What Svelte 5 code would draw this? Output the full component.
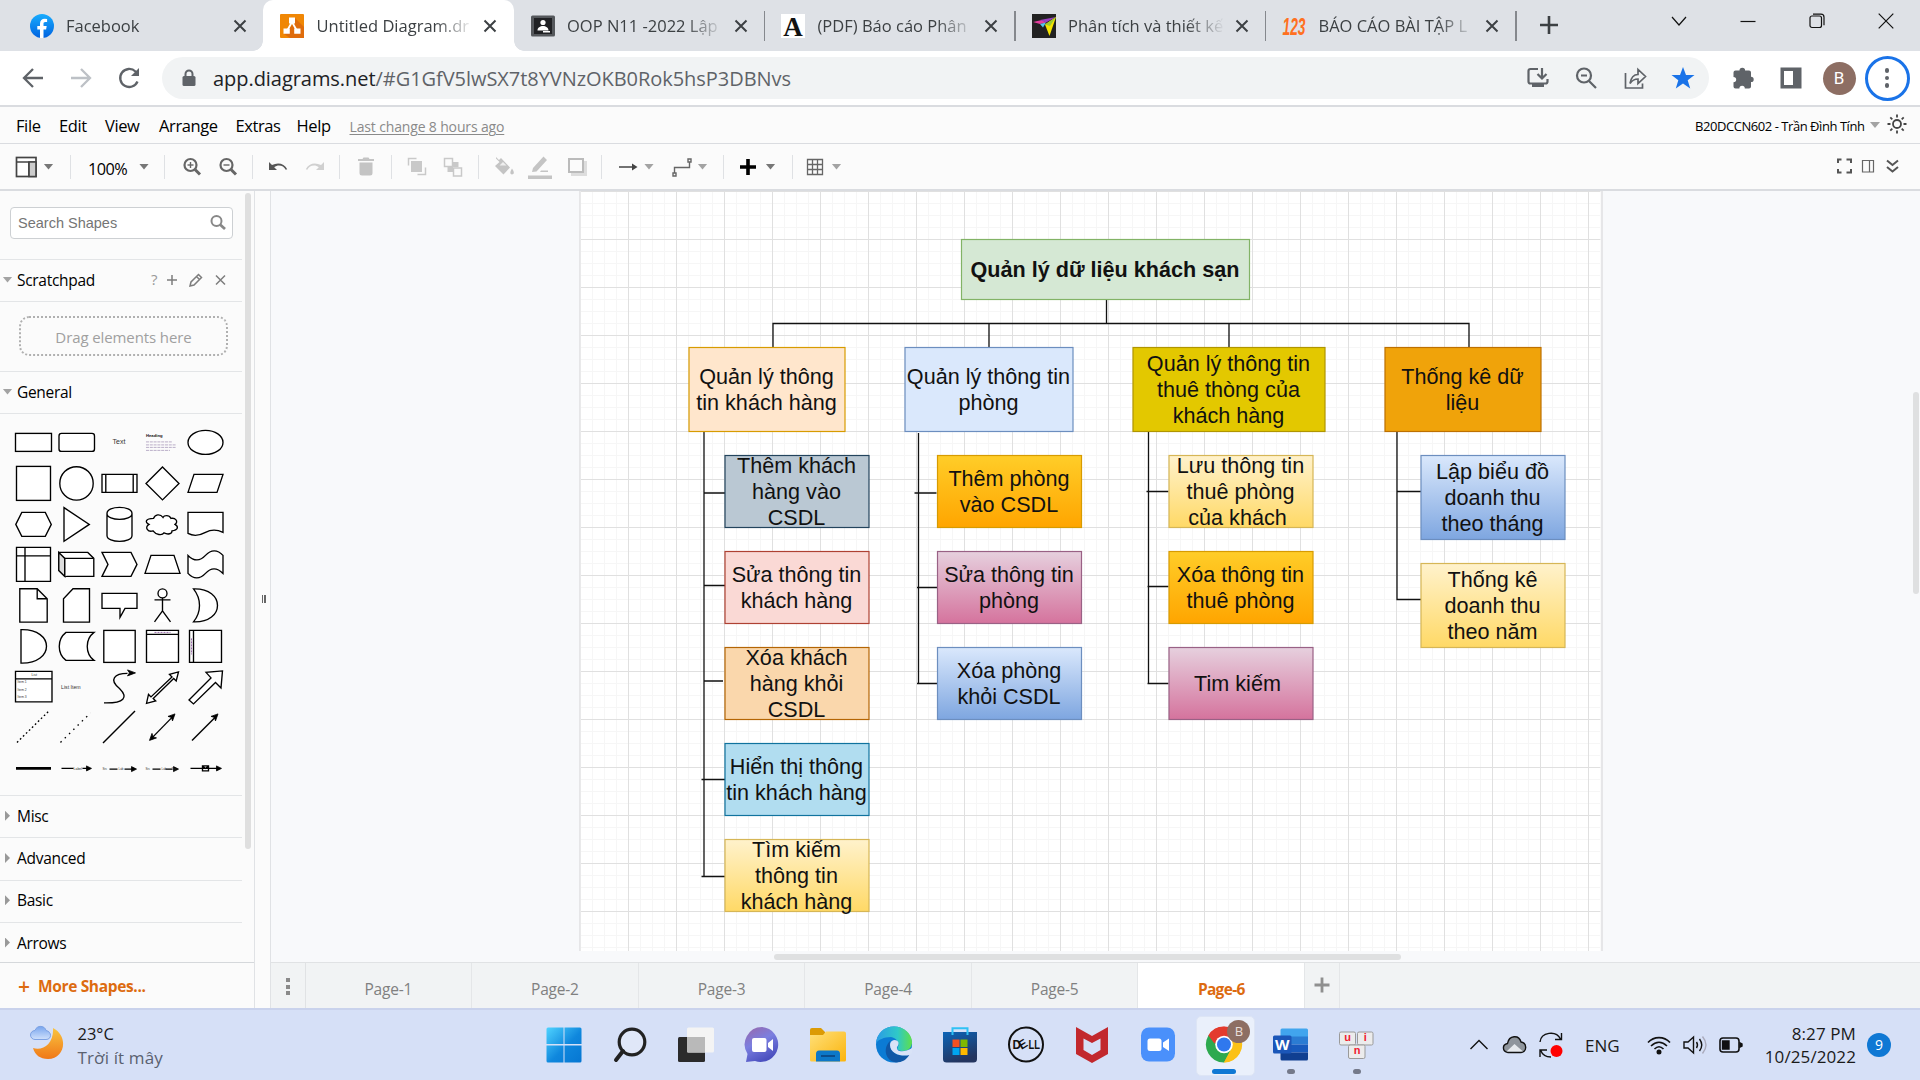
<script lang="ts">
  const tabs = [
    { title: 'Facebook', icon: 'fb' },
    { title: 'Untitled Diagram.dr', icon: 'drawio', active: true },
    { title: 'OOP N11 -2022 Lập', icon: 'oop' },
    { title: '(PDF) Báo cáo Phân', icon: 'pdf' },
    { title: 'Phân tích và thiết kế', icon: 'design' },
    { title: 'BÁO CÁO BÀI TẬP L', icon: 'n123' }
  ];
  const menus = [
    { t: 'File', w: 43 }, { t: 'Edit', w: 46 }, { t: 'View', w: 54 },
    { t: 'Arrange', w: 76.5 }, { t: 'Extras', w: 61 }, { t: 'Help', w: 53 }
  ];
  // [kind, gap before the item]
  const tools: [string, number][] = [
    ['view', 14], ['caret', 5.5], ['sep', 16.5], ['zoom', 17], ['caret', 11], ['sep', 15],
    ['zin', 15], ['zout', 12], ['sep', 12], ['undo', 13], ['redo', 13], ['sep', 12],
    ['trash', 14], ['sep', 13], ['front', 13], ['back', 12], ['sep', 13], ['fill', 12.5],
    ['line', 12], ['shadow', 13], ['sep', 12.5], ['arrow', 14], ['caretl', 4], ['way', 15.5],
    ['caretl', 4], ['sep', 15.5], ['plus', 12], ['caret', 5.5], ['sep', 16.5], ['table', 9.5], ['caretl', 5]
  ];
  const shapes: string[] = [
    '<rect x="-18" y="-9" width="36" height="18"/>',
    '<rect x="-17.5" y="-9" width="35.5" height="18" rx="2.5"/>',
    '<text x="-.5" y="2" font-size="7" text-anchor="middle">Text</text>',
    '<text x="-16.5" y="-5" font-size="4.2" font-weight="bold" class="hd">Heading</text><path class="lorem" d="M-16.500-.5h26M-16.500 2.500h30M-16.500 5h30M-16.500 8h24"/>',
    '<ellipse rx="17.5" ry="12"/>',
    '<rect x="-17" y="-17" width="34" height="34"/>',
    '<circle r="16.7"/>',
    '<path d="M-17.500-9h35v18h-35zM-13.700-9v18M13.700-9v18"/>',
    '<path d="M0-16.500 16.500 0 0 16.500-16.500 0z"/>',
    '<path d="M-17.500 9l6-18h29l-6 18z"/>',
    '<path d="M-17.700 0l6-12h23.500l6 12-6 12h-23.500z"/>',
    '<path d="M-12.500-16.800v33.600L12.800 0z"/>',
    '<path d="M-12.500-11v22c0 8 25 8 25 0v-22c0-8-25-8-25 0c0 8 25 8 25 0"/>',
    '<path d="M-9-6c-8 0-9 4-4.500 6c-5 3-1 8 4 6.500c3 4 9 5 11 2c4 2 8 1 8-2c6-1 7-4 3-6.500c4-3 0-7-4-6c-2-4-7-3-8-1c-3-4-8-3-9.500 1z"/>',
    '<path d="M-17.500-12h35v20c-6-3-12-3-17.500 0s-12 4-17.500 1z"/>',
    '<path d="M-17-17h34v34h-34zM-8.500-17v34M-17-8.500h34"/>',
    '<path d="M-17.700-12h29l6 6v18h-29l-6-6z"/><path class="shade" d="M-17.700-12l6 6v18l-6-6z"/><path d="M-11.700 12v-18h29"/>',
    '<path d="M-17.500-12h29l6 12-6 12h-29l6-12z"/>',
    '<path d="M-17.500 9l6-18h23l6 18z"/>',
    '<path d="M-17.500-9c6 6 12 6 17.500 0s12-6 17.500 0v18c-6-6-12-6-17.500 0s-12 6-17.500 0z"/>',
    '<path d="M-13.700-16.700h17.400l10 10v23.400h-27.400zM3.700-16.700v10h10"/>',
    '<path d="M-3.500-16.700h16.500v33.400h-26v-23.400z"/>',
    '<path d="M-17.500-12h35v15h-12l-5 9v-9h-18z"/>',
    '<circle cy="-12" r="4.500"/><path d="M0-7.500v13M-8-5.500h16M-8 16.500l8-11 8 11"/>',
    '<path d="M-12-16.500c32-1 32 34 0 33c8-10 8-23 0-33z"/>',
    '<path d="M-12.500-16.700c34-1 34 34 0 33.400z"/>',
    '<path d="M17.500-14h-28c-9 7-9 21 0 28h28c-9-7-9-21 0-28z"/>',
    '<rect x="-15.700" y="-16" width="31.400" height="32"/>',
    '<path d="M-16-16h32v32h-32zM-16-12h32"/><path class="dots" d="M-8-14H8"/>',
    '<path d="M-16-16h32v32h-32zM-12-16v32"/><path class="dots" d="M-14-8V8"/>',
    '<path d="M-18-16h36.500v30.500h-36.500zM-18-8.500h36.500"/><text x="-2" y="-11" font-size="3.5">List</text><text x="-16" y="-4" font-size="3.300">Item 1</text><text x="-16" y="3.500" font-size="3.300">Item 2</text><text x="-16" y="11" font-size="3.300">Item 3</text>',
    '<text x="-15.500" y="1.500" font-size="5.200">List Item</text>',
    '<path class="nf" d="M-15.500 15.500C5 16 9 10 0 1c-11-9-5-15 8-15"/><path class="k" d="M16-14.500l-8-3 2 3-2 3z"/>',
    '<path d="M-16 16l2-9 2.500 2.500 21-20-2.500-2.500 9-2.500-2.300 9-2.500-2.500-20.500 20 2.500 2.500z"/>',
    '<path d="M-16.500 12.500l22-22-5-5.500 16.500-1.500-1.500 17-5.500-5.500-22 21.500z"/>',
    '<path stroke-dasharray="1.700 2.500" d="M-16.500 15l32-31.500"/>',
    '<path stroke-dasharray="1.500 4.500" d="M-16 15l30-29.500"/>',
    '<path d="M-16.500 15.500l32-32"/>',
    '<path d="M-11 11l22-22.500"/><path class="k" d="M-13 13l2.500-7 1 3.500 3.500 1zM12.500-13.500l-7 2.500 3.500 1 1 3.500z"/>',
    '<path d="M-13.500 13l24-24"/><path class="k" d="M12.500-13.500l-7 2.500 3.500 1 1 3.500z"/>',
    '<path stroke-width="2.800" d="M-17.500 0h35"/>',
    '<path d="M-15 0h12M6 0h6"/><path class="k" d="M15 0l-5-2.500v5z"/><text x="-3" y="1.500" font-size="3.500">Label</text>',
    '<path d="M-10 .7h8M5 .7h8"/><path class="k" d="M17 .7l-5-2.500v5z"/><text x="-17" y="1.500" font-size="3">Src</text><text x="-1" y="1.500" font-size="3">Lab</text>',
    '<path d="M-10 .7h8M3 .7h7"/><path class="k" d="M16 .7l-5-2.500v5z"/><text x="-17" y="1.500" font-size="3">Src</text><text x="-1" y="1.500" font-size="3">Lab</text><text x="9" y="1.500" font-size="3">Trg</text>',
    '<path d="M-15 0h27M-3-2.500h6v5h-6zl3 2.500 3-2.500"/><path class="k" d="M16 0l-5-2.500v5z"/>'
  ];
  const sections = ['Misc', 'Advanced', 'Basic', 'Arrows'];
  const nodes = [
    { x: 961.5, y: 239.5, w: 288, h: 60, c: 'green', l: ['Quản lý dữ liệu khách sạn'] },
    { x: 689, y: 347.5, w: 156, h: 84, c: 'peach', l: ['Quản lý thông', 'tin khách hàng'] },
    { x: 905, y: 347.5, w: 168, h: 84, c: 'sky', l: ['Quản lý thông tin', 'phòng'] },
    { x: 1133, y: 347.5, w: 192, h: 84, c: 'olive', l: ['Quản lý thông tin', 'thuê thòng của', 'khách hàng'] },
    { x: 1385, y: 347.5, w: 156, h: 84, c: 'orange', l: ['Thống kê dữ', 'liệu'] },
    { x: 725, y: 455.5, w: 144, h: 72, c: 'slate', l: ['Thêm khách', 'hàng vào', 'CSDL'] },
    { x: 725, y: 551.5, w: 144, h: 72, c: 'rose', l: ['Sửa thông tin', 'khách hàng'] },
    { x: 725, y: 647.5, w: 144, h: 72, c: 'tan', l: ['Xóa khách', 'hàng khỏi', 'CSDL'] },
    { x: 725, y: 743.5, w: 144, h: 72, c: 'aqua', l: ['Hiển thị thông', 'tin khách hàng'] },
    { x: 725, y: 839.5, w: 144, h: 72, c: 'cream', l: ['Tìm kiếm', 'thông tin', 'khách hàng'] },
    { x: 937.5, y: 455.5, w: 144, h: 72, c: 'amber', l: ['Thêm phòng', 'vào CSDL'] },
    { x: 937.5, y: 551.5, w: 144, h: 72, c: 'pink', l: ['Sửa thông tin', 'phòng'] },
    { x: 937.5, y: 647.5, w: 144, h: 72, c: 'blue', l: ['Xóa phòng', 'khỏi CSDL'] },
    { x: 1169, y: 455.5, w: 144, h: 72, c: 'cream', l: ['Lưu thông tin', 'thuê phòng', 'của khách\u00a0'] },
    { x: 1169, y: 551.5, w: 144, h: 72, c: 'amber', l: ['Xóa thông tin', 'thuê phòng'] },
    { x: 1169, y: 647.5, w: 144, h: 72, c: 'pink', l: ['Tim kiếm\u00a0'] },
    { x: 1421, y: 455.5, w: 144, h: 84, c: 'blue', l: ['Lập biểu đồ', 'doanh thu', 'theo tháng'] },
    { x: 1421, y: 563.5, w: 144, h: 84, c: 'cream', l: ['Thống kê', 'doanh thu', 'theo năm'] }
  ];
  const gradients = [
    ['g-cream', '#fff2cc', '#ffd966'], ['g-amber', '#ffcd28', '#ffa500'],
    ['g-pink', '#e6d0de', '#d5739d'], ['g-blue', '#dae8fc', '#7ea6e0']
  ];
  const pages = ['Page-1', 'Page-2', 'Page-3', 'Page-4', 'Page-5', 'Page-6'];
  const apps = ['start', 'search', 'tasks', 'chat', 'files', 'edge', 'store', 'dell', 'mcafee', 'zoom', 'chrome', 'word', 'unikey'];
</script>

<div class="screen">
  <header class="tabstrip">
    {#each tabs as tab, i}
      <div class="tab" class:active={tab.active} class:divided={i > 1}>
        <svg class="fav" viewBox="0 0 24 24">
          {#if tab.icon === 'fb'}
            <defs><linearGradient id="fbg" x2="0" y2="1"><stop stop-color="#18acfe" /><stop offset="1" stop-color="#0163e0" /></linearGradient></defs>
            <circle cx="12" cy="12" r="12" fill="url(#fbg)" />
            <path fill="#fff" d="M10 24v-8.500H7.300V12H10V9.800c0-3.400 2-5 4.700-5l2.400.2v3h-1.700c-1.500 0-1.900.8-1.900 1.700V12h3.200l-.6 3.500h-2.600V24z" />
          {:else if tab.icon === 'drawio'}
            <rect width="24" height="24" fill="#f08705" rx="1" /><path fill="#df6c0c" d="M15 4l9 9v11H10l-6-4 8-9z" />
            <path stroke="#fff" stroke-width="1.800" fill="none" d="M12 8l-4.500 8M12 8l4.500 8" /><path fill="#fff" d="M9 3.500h6v6H9zM3.500 14.500h6.300v5.300H3.500zM14.200 14.500h6.300v5.300h-6.300z" />
          {:else if tab.icon === 'oop'}
            <rect y="1.500" width="24" height="21" rx="1.500" fill="#55585c" /><rect x="3" y="4" width="18" height="16" fill="#202124" />
            <circle cx="12" cy="8.500" r="2.600" fill="#fff" /><path fill="#fff" d="M6.500 16.500c0-6 11-6 11 0zM12 17h7v1.500h-7z" />
          {:else if tab.icon === 'pdf'}
            <rect width="24" height="24" fill="#fff" /><text x="12" y="21.500" text-anchor="middle" class="serif-a">A</text>
          {:else if tab.icon === 'design'}
            <rect width="24" height="24" fill="#222" /><path fill="#e83ea0" d="M1 8l9-2 4 2.500-6 1.500z" /><path fill="#9a3fc0" d="M8 6l16-3-10 5.500z" /><path fill="#54c7ec" d="M8 10l6-1.500-3 5z" /><path fill="#f6e500" d="M24 3l-6.500 19L13 10.500z" /><path fill="#9ccb2e" d="M24 3l-6 9-5-1.500z" />
          {:else}
            <text x="12" y="21" text-anchor="middle" class="n123" textLength="23" lengthAdjust="spacingAndGlyphs">123</text>
          {/if}
        </svg>
        <span class="tab-title">{tab.title}</span>
        <svg class="x" viewBox="0 0 14 14"><path d="M1.500 1.500l11 11M12.500 1.500l-11 11" /></svg>
      </div>
    {/each}
    <svg class="newtab" viewBox="0 0 20 20"><path d="M10 1v18M1 10h18" /></svg>
    <div class="winctl">
      <svg viewBox="0 0 16 16"><path d="M1 4l7 8 7-8" /></svg>
      <svg viewBox="0 0 16 16"><path d="M.5 8.500h15" /></svg>
      <svg viewBox="0 0 16 16"><rect x="1" y="3" width="11.500" height="11.500" rx="2" /><path d="M4 1.200h8q3 0 3 3v8" /></svg>
      <svg viewBox="0 0 16 16"><path d="M.7.700l14.600 14.600M15.300.700L.7 15.300" /></svg>
    </div>
  </header>

  <div class="addressbar">
    <svg class="nav" viewBox="0 0 24 24"><path d="M22 12H3.500M12 3l-9 9 9 9" /></svg>
    <svg class="nav dim" viewBox="0 0 24 24"><path d="M2 12h18.500M12 3l9 9-9 9" /></svg>
    <svg class="nav" viewBox="0 0 24 24"><path d="M20.500 15.500A9 9 0 1 1 18.500 5.500L21 8" /><path d="M22 2v8h-8z" class="solid" /></svg>
    <div class="omni">
      <svg class="lock" viewBox="0 0 14 18"><path d="M3.500 8V5a3.500 3.500 0 0 1 7 0v3" /><rect x=".5" y="7" width="13" height="10" rx="1.500" /></svg>
      <span class="url"><b>app.diagrams.net</b>/#G1GfV5lwSX7t8YVNzOKB0Rok5hsP3DBNvs</span>
      <svg class="oi" viewBox="0 0 24 24"><path d="M12 3H4.500q-2 0-2 2v10.500q0 2 2 2h15q2 0 2-2V13M16 2v9.500M11.500 8l4.500 4.500L20.500 8" /><path class="solid" d="M6 18h12v3H6z" /></svg>
      <svg class="oi" viewBox="0 0 24 24"><circle cx="10" cy="9.500" r="7" /><path d="M15 15l7 7M7 9.500h6" /></svg>
      <svg class="oi" viewBox="0 0 24 24"><path class="thin" d="M2.500 7v15h17v-4.500M7 17.500c1-6 4-9 8-9V3.500l7.500 7-7.500 7V13c-4 0-6 1.500-8 4.500z" /></svg>
      <svg class="oi star" viewBox="0 0 24 24"><path d="M12 1l3 8h8.500l-6.800 5.200 2.500 8.300L12 17.500l-7.200 5 2.500-8.300L.5 9H9z" /></svg>
    </div>
    <svg class="ext" viewBox="0 0 24 24"><path d="M8.500 4.500a2.800 2.800 0 0 1 5.600 0H18a2 2 0 0 1 2 2v4.200a2.700 2.700 0 0 1 0 5.400V20.500a2 2 0 0 1-2 2h-4.200a2.700 2.700 0 0 0-5.400 0H4.500a2 2 0 0 1-2-2v-4.200a2.700 2.700 0 0 0 0-5.400V6.500a2 2 0 0 1 2-2z" /></svg>
    <svg class="ext" viewBox="0 0 24 24"><path fill-rule="evenodd" d="M1.500 1.500h21v21h-21zM5 5v14h9V5z" /></svg>
    <div class="avatar">B</div>
    <div class="more"><i></i><i></i><i></i></div>
  </div>

  <div class="menubar">
    <nav>{#each menus as m}<span style:width="{m.w}px">{m.t}</span>{/each}</nav>
    <span class="change">Last change 8 hours ago</span>
    <span class="user">B20DCCN602 - Trần Đình Tính</span>
    <i class="caret light big"></i>
    <svg class="sun" viewBox="0 0 20 20"><circle cx="10" cy="10" r="4" /><path d="M10 .5v3M10 16.500v3M.5 10h3M16.500 10h3M3.300 3.300l2 2M14.700 14.700l2 2M3.300 16.700l2-2M14.700 5.300l2-2" /></svg>
  </div>

  <div class="toolbar">
    {#each tools as [kind, gap]}
      {#if kind === 'sep'}
        <i class="sep" style:margin-left="{gap}px"></i>
      {:else if kind === 'zoom'}
        <span class="pct" style:margin-left="{gap}px">100%</span>
      {:else if kind === 'caret' || kind === 'caretl'}
        <i class="caret" class:light={kind === 'caretl'} style:margin-left="{gap}px"></i>
      {:else}
        <svg class="tool" viewBox="0 0 24 24" style:margin-left="{gap}px">
          {#if kind === 'view'}<g class="d"><rect x="2.500" y="2.500" width="19.500" height="19" /><path d="M2.500 7H22M15 7v14.500" /><path fill="#ccc" d="M15 7h7v14.500h-7z" /></g>
          {:else if kind === 'zin' || kind === 'zout'}<g class="z"><circle cx="10.500" cy="10" r="6" /><path d="M15 14.500l5 5" stroke-width="3" /><path d="M7.500 10h6" stroke-width="1.400" />{#if kind === 'zin'}<path d="M10.500 7v6" stroke-width="1.400" />{/if}</g>
          {:else if kind === 'undo'}<path fill="#555" d="M3 7v8h8l-2.800-2.800c4-3 9.500-1.700 11.500 2.600l1.500-.6C18.500 8.500 12 7 6 10z" />
          {:else if kind === 'redo'}<path fill="#d0d0d0" d="M21 7v8h-8l2.800-2.800c-4-3-9.500-1.700-11.500 2.600l-1.500-.6C5.500 8.500 12 7 18 10z" />
          {:else if kind === 'trash'}<path fill="#c4c4c4" d="M4 4h4.500l1-1.500h5l1 1.500H20v2H4zM5.500 7.500h13V18q0 2.500-2.500 2.500H8q-2.500 0-2.500-2.500z" />
          {:else if kind === 'front'}<g class="l"><path d="M3.500 10.500v-7h8M20.500 12.500v7h-8" /><rect x="6" y="6" width="11" height="11" class="s" /></g>
          {:else if kind === 'back'}<g class="l"><rect x="3.500" y="3.500" width="8" height="8" /><rect x="12.500" y="13" width="8" height="8" /><path class="s" d="M12 7h5.500v5H12zM6.500 12H12v5H6.500z" /></g>
          {:else if kind === 'fill'}<path fill="#c4c4c4" d="M4 2l3 3 2-2 9 9.500-6.500 7L3 11l4.500-4-3.500-3.500zM20 13.500q2.800 4 1.400 5.300t-2.800 0q-1-1.500 1.400-5.300z" /><path fill="#eee" d="M7.500 10.500L11 7l3.500 3.500z" />
          {:else if kind === 'line'}<path fill="#c4c4c4" d="M0 20.500h24V24H0zM4 17l1-4L15.500 1.500 19 5 8.500 16.500zM13 15.500h7v1.500h-8z" />
          {:else if kind === 'shadow'}<path fill="#ddd" d="M6 6h16v15H6z" /><rect x="4" y="4" width="14" height="13" fill="#fbfbfb" stroke="#bbb" stroke-width="2" />
          {:else if kind === 'arrow'}<path d="M3 12h15" stroke="#444" stroke-width="1.500" /><path fill="#444" d="M16 8.500l5.500 3.500-5.500 3.500z" />
          {:else if kind === 'way'}<g fill="none" stroke="#666" stroke-width="1.400"><path d="M4.500 18v-5.500h15V7" /><path d="M3 18h3v3H3zM18 4h3v3h-3z" /></g>
          {:else if kind === 'plus'}<path d="M12 4v16M4 12h16" stroke="#000" stroke-width="3.600" />
          {:else}<path fill="none" stroke="#666" stroke-width="1.300" d="M4.500 4.500h15v15h-15zM9.500 4.500v15M14.500 4.500v15M4.500 9.500h15M4.500 14.500h15" />{/if}
        </svg>
      {/if}
    {/each}
    <svg class="right" viewBox="0 0 64 18">
      <path class="th" d="M2 6V2.500h3.500M10.500 2.500H15V6M15 12v3.500h-4.500M5.500 15.500H2V12" />
      <path d="M26.500 3.500h11v11.500h-11zM33.500 3.500v11.500" /><path class="th" d="M51 3.500l5.500 4.500L62 3.500M51 10l5.500 4.500L62 10" />
    </svg>
  </div>

  <main>
    <aside>
      <div class="scroll">
        <div class="searchwrap"><div class="search"><span>Search Shapes</span><svg viewBox="0 0 16 16"><circle cx="6.500" cy="6" r="5" /><path d="M10 9.500l5 4.500" stroke-width="2.800" /></svg></div></div>
        <div class="head"><i class="caret light"></i><span>Scratchpad</span>
          <svg class="acts" viewBox="0 0 80 16"><text x="1" y="13" font-size="15">?</text><path d="M17 8h10M22 3v10M66 3.500l9 9M75 3.500l-9 9" /><path d="M40 14l1-4 7.500-7.500 3 3L44 13zM46.500 4.500l3 3" /></svg>
        </div>
        <div class="dragwrap"><div class="drag">Drag elements here</div></div>
        <div class="head"><i class="caret light"></i><span>General</span></div>
        <div class="palette">
          {#each shapes as s}<svg viewBox="-21.500 -20.400 43.100 40.750">{@html s}</svg>{/each}
        </div>
        {#each sections as s}<div class="head closed"><i class="tri"></i><span>{s}</span></div>{/each}
      </div>
      <div class="thumb"></div>
      <div class="moreshapes"><span class="pl">+</span>More Shapes...</div>
    </aside>
    <div class="splitter"><i></i><i></i></div>

    <section>
      <svg class="canvas" viewBox="271 191 1649 771">
        <defs>
          <pattern id="grid" x="628" y="239" width="48" height="48" patternUnits="userSpaceOnUse">
            <path d="M12.500 0v48M24.500 0v48M36.500 0v48M0 12.500h48M0 24.500h48M0 36.500h48" stroke="#f6f6f6" />
            <path d="M.5 0v48M0 .5h48" stroke="#e0e0e0" />
          </pattern>
          {#each gradients as [id, a, b]}
            <linearGradient {id} x2="0" y2="1"><stop stop-color={a} /><stop offset="1" stop-color={b} /></linearGradient>
          {/each}
        </defs>
        <path d="M579 191h1024v760H579z" fill="#e6e6e8" />
        <path d="M580.500 191h1020.500v760H580.500z" fill="#fff" />
        <path d="M580.500 191h1020v760H580.500z" fill="url(#grid)" />
        <path class="wire" d="M1106.500 299v24.500M773 347.500v-24H1469v24M989 323.500v24M1229 323.500v24" />
        <path class="wire" d="M704 431v445.500M704 493h21M704 585.500h21M704 681h19M701.500 779.500h23.500M701.500 876.500h23.500" />
        <path class="wire" d="M918.500 433v250.500M914.500 493h22M917 587.500h20M917 683.500h20" />
        <path class="wire" d="M1148.500 431v252.500M1146.500 491.500h22M1147.500 586.500h21M1147.500 683.500h21" />
        <path class="wire" d="M1397 431v168.500h24M1397 491.500h24" />
        {#each nodes as n}
          <g class="node {n.c}">
            <rect x={n.x} y={n.y} width={n.w} height={n.h} />
            {#each n.l as line, i}
              <text x={n.x + n.w / 2 - 0.5} y={n.y + n.h / 2 + 7.2 + (i - (n.l.length - 1) / 2) * 26}>{line}</text>
            {/each}
          </g>
        {/each}
        <rect x="774" y="954" width="627" height="6" rx="3" fill="#dfe0e1" />
        <rect x="1913" y="392" width="6" height="202" rx="3" fill="#dfe0e1" />
      </svg>
      <footer class="pages">
        <div class="pdots"><i></i><i></i><i></i></div>
        {#each pages as p, i}<div class="page" class:on={i === 5}>{p}</div>{/each}
        <div class="addpage"><svg viewBox="0 0 16 16"><path d="M8 .5v15M.5 8h15" /></svg></div>
      </footer>
    </section>
  </main>

  <div class="taskbar">
    <div class="weather">
      <svg viewBox="0 0 36 36">
        <defs><linearGradient id="moon" x2="0" y2="1"><stop stop-color="#f9c440" /><stop offset="1" stop-color="#f07818" /></linearGradient>
          <linearGradient id="cl" x2="0" y2="1"><stop stop-color="#78a5ee" /><stop offset="1" stop-color="#cfe0fb" /></linearGradient></defs>
        <path fill="url(#moon)" d="M24 3c16 8 12 31-5 31C11 34 6 30 4 23c10 3 21-4 20-20z" />
        <path fill="url(#cl)" stroke="#7da2e3" d="M6 14.500a4.500 4.500 0 0 1 0-9c2-6 10-5 11 0c6 1 6 9 0 9z" />
      </svg>
      <div><p>23°C</p><p class="sub">Trời ít mây</p></div>
    </div>
    <div class="apps">
      {#each apps as a}
        <div class="app" class:current={a === 'chrome'}>
          <svg viewBox="0 0 40 40">
            {#if a === 'start'}
              <defs><linearGradient id="win" x2="1" y2="1"><stop stop-color="#4fd3ff" /><stop offset=".55" stop-color="#0f87dd" /><stop offset="1" stop-color="#0676d2" /></linearGradient></defs>
              <path fill="url(#win)" d="M4 2.500h15.500V19H2.500V4q0-1.500 1.500-1.500zM20.500 2.500H36q1.500 0 1.500 1.500v15h-17zM2.500 20.500h17v17H4q-1.500 0-1.500-1.500zM20.500 20.500h17V36q0 1.500-1.500 1.500H20.500z" />
            {:else if a === 'search'}
              <circle cx="22" cy="17" r="12.800" fill="#e0e7f8" stroke="#222" stroke-width="3.200" /><path d="M13 26L6 35" stroke="#222" stroke-width="4" stroke-linecap="round" />
            {:else if a === 'tasks'}
              <rect x="2" y="12" width="27" height="25" rx="1.500" fill="#2b2b2b" /><rect x="11" y="2.500" width="27" height="25" rx="1.500" fill="#f4f4f4" /><path fill="#b9b9b9" d="M11 12h18v15.500H12q-1 0-1-1z" />
            {:else if a === 'chat'}
              <defs><linearGradient id="chat" x2=".5" y2="1"><stop stop-color="#9a66a8" /><stop offset=".5" stop-color="#7b7fe0" /><stop offset="1" stop-color="#4b50bf" /></linearGradient></defs>
              <path fill="url(#chat)" d="M20 2a17.500 17.500 0 1 1-7 34l-9 1 1.500-8A17.500 17.500 0 0 1 20 2z" /><rect x="10" y="13" width="14.500" height="14" rx="2" fill="#fff" /><path fill="#fff" d="M26 18l5-4v12l-5-4z" />
            {:else if a === 'files'}
              <defs><linearGradient id="fold" x2="1" y2="1"><stop stop-color="#ffe07a" /><stop offset="1" stop-color="#fbb40c" /></linearGradient></defs>
              <path fill="#dc9b05" d="M2 5q0-2 2-2h9l4 4v6H2z" /><path fill="url(#fold)" d="M2 10h13l3-3.500h18q2 0 2 2V35q0 1.500-1.500 1.500h-33Q2 36.500 2 35z" /><path fill="#0c78c8" d="M8 36.500V29q0-3.500 3-3.500h18q3 0 3 3.500v7.500z" /><path stroke="#0a4d8c" stroke-width="2" d="M13 31h14" />
            {:else if a === 'edge'}
              <defs><linearGradient id="edge" x2="1"><stop stop-color="#2a9be6" /><stop offset=".6" stop-color="#2fc8c8" /><stop offset="1" stop-color="#5fe04a" /></linearGradient></defs>
              <circle cx="20" cy="19.500" r="18" fill="#0b7bd4" /><path fill="url(#edge)" d="M2 18C3 8 10 1.500 20 1.500S38 9 38 17c0 6-4 9-9 9-4 0-7-2-5-4 2-5-2-9-7-10-7 0-13 3-15 6z" /><path fill="#0f57a6" d="M16 16c-8 8-4 20 6 21.500 6 0 11-3 13.500-8C26 33 14 28 16 16z" /><path fill="#d9e3f7" d="M20 15c6 0 5 5 3 7-1 5 7 6 15 1v5l-2.500 2C28 32 16 29 16 20q0-4 4-5z" />
            {:else if a === 'store'}
              <defs><linearGradient id="store" x2=".4" y2="1"><stop stop-color="#0b64b8" /><stop offset="1" stop-color="#24355f" /></linearGradient></defs>
              <path fill="url(#store)" d="M3 7h34v27q0 3.500-3.500 3.500h-27Q3 37.500 3 34z" /><path fill="none" stroke="#2fc1f5" stroke-width="2" d="M12.500 10V3.200h15V10" /><path fill="#f25022" d="M12.500 14.500h7v7.500h-7z" /><path fill="#7fba00" d="M20.500 14.500h7v7.500h-7z" /><path fill="#00a4ef" d="M12.500 23h7v7h-7z" /><path fill="#ffb900" d="M20.500 23h7v7h-7z" />
            {:else if a === 'dell'}
              <circle cx="20" cy="19.500" r="17" fill="none" stroke="#111" stroke-width="2" />
              <g class="dell"><text x="6.500" y="24" textLength="8.500" lengthAdjust="spacingAndGlyphs">D</text><text transform="translate(15.500 25) rotate(-32)">E</text><text x="22.500" y="24" textLength="11.500" lengthAdjust="spacingAndGlyphs">LL</text></g>
            {:else if a === 'mcafee'}
              <path fill="#c2282d" fill-rule="evenodd" d="M4 2l16 9 16-9v27L20 38 4 29zM11.500 13.500V25l8.500 5 8.500-5V13.500L20 18z" />
            {:else if a === 'zoom'}
              <rect x="3" y="2.500" width="34" height="34" rx="8" fill="#4a90fb" /><rect x="9.500" y="13.500" width="14" height="12.500" rx="2.500" fill="#fff" /><path fill="#fff" d="M25 17.500l6-4v12.500l-6-4z" />
            {:else if a === 'chrome'}
              <path fill="#e33b2e" d="M20 19.500L4.400 10.500A18 18 0 0 1 35.600 10.500z" /><path fill="#fbc116" d="M20 19.500l15.600-9A18 18 0 0 1 20 37.500z" /><path fill="#2da94f" d="M20 19.500v18A18 18 0 0 1 4.400 10.500z" /><path fill="#2da94f" d="M4.400 10.500l8.500 14L20 37.500l7-13z" /><path fill="#fbc116" d="M20 37.500l7.500-14V11h8.100A18 18 0 0 1 20 37.500z" /><path fill="#e33b2e" d="M4.400 10.500l6 8L20 11h15.600A18 18 0 0 0 4.400 10.500z" /><circle cx="20" cy="19.500" r="8.800" fill="#fff" /><circle cx="20" cy="19.500" r="7" fill="#2f78ee" />
            {:else if a === 'word'}
              <path fill="#41a5ee" d="M9.500 5q0-1.500 1.500-1.500h24.500q1.500 0 1.500 1.500v7H9.500z" /><path fill="#2b7cd3" d="M9.500 11.500H37v8H9.500z" /><path fill="#185abd" d="M9.500 19.500H37v8H9.500z" /><path fill="#103f91" d="M9.500 27.500H37V34q0 1.500-1.500 1.500H11q-1.500 0-1.500-1.500z" /><rect x="2" y="10.500" width="18.500" height="18" rx="1.500" fill="#1b56b8" /><text x="11.300" y="25" class="w" text-anchor="middle">W</text>
            {:else}
              <g fill="#ececec" stroke="#9a9a9a"><rect x="2.500" y="7" width="16" height="13" rx="1.500" /><rect x="20.500" y="7" width="15.500" height="13" rx="1.500" /><rect x="11.500" y="20" width="16.500" height="13.500" rx="1.500" /></g>
              <text x="10.500" y="16" class="key">u</text><text x="28.300" y="16" class="key">i</text><text x="20" y="29" class="key">n</text>
            {/if}
          </svg>
          {#if a === 'chrome'}<span class="badge">B</span><i class="bar"></i>{/if}
          {#if a === 'word' || a === 'unikey'}<i class="dot"></i>{/if}
        </div>
      {/each}
    </div>
    <div class="tray">
      <svg class="t1" viewBox="0 0 20 24"><path d="M1.500 16L10 7.500l8.500 8.500" /></svg>
      <svg class="t2" viewBox="0 0 26 24"><path fill="#8f959c" d="M6 19.500c-6-1-6-8-.5-9C7 2 17 1.500 19 9c6 1 6.500 9.500 0 10.500z" /><path fill="#e6e9ed" stroke="none" d="M4.500 18.500l8-7.500 8.500 7.500z" /></svg>
      <svg class="t3" viewBox="0 0 26 28"><path d="M2 11C3 1 18-1 22.500 8M23.500 2v6.500H17M13 26C7 26 4 23 2.500 19M2 26v-7h7" /><circle cx="18.500" cy="20" r="6" fill="red" stroke="none" /></svg>
      <span class="eng">ENG</span>
      <svg class="t4" viewBox="0 0 26 24"><path stroke-width="1.600" d="M2 9.500C8 3 18 3 24 9.500M5 13c5-5 11-5 16 0M8.500 16c3-3 6-3 9 0" /><circle cx="13" cy="19" r="1.800" fill="#111" /></svg>
      <svg class="t5" viewBox="0 0 26 24"><path d="M2 9v6h4l5.500 5V4L6 9zM14.500 9q2 3 0 6M17.500 6q4.500 6 0 12" /><path stroke="#aab" d="M20.500 3.500q7 8.500 0 17" /></svg>
      <svg class="t6" viewBox="0 0 26 24"><rect x="2" y="5" width="19" height="14" rx="3" stroke-width="1.600" /><path fill="#111" d="M4.500 8h6.500v8H4.500zM22 10l2 1v2l-2 1z" /></svg>
      <div class="clock"><p>8:27 PM</p><p>10/25/2022</p></div>
      <span class="nine">9</span>
    </div>
  </div>
</div>

<style>
  :global(body) { margin: 0; overflow: hidden; }
  * { box-sizing: border-box; }
  p { margin: 0; }
  svg { display: block; flex: none; }
  .screen { width: 1920px; height: 1080px; display: flex; flex-direction: column; background: #fbfbfb; font-family: 'Open Sans', 'Noto Sans', sans-serif; color: #000; overflow: hidden; white-space: nowrap; }

  .tabstrip { height: 51px; background: #dee1e6; display: flex; padding-left: 12.500px; flex: none; }
  .tab { position: relative; width: 250.500px; height: 51px; display: flex; align-items: center; padding-left: 17px; flex: none; }
  .tab.divided::after { content: ''; position: absolute; right: -1px; top: 11px; width: 1.500px; height: 30px; background: #85888d; }
  .tab.active { background: #fff; border-radius: 10px 10px 0 0; }
  .tab.active::before, .tab.active::after { content: ''; position: absolute; bottom: 0; width: 10px; height: 10px; }
  .tab.active::before { left: -10px; background: radial-gradient(circle at 0 0, transparent 9.500px, #fff 10px); }
  .tab.active::after { right: -10px; background: radial-gradient(circle at 100% 0, transparent 9.500px, #fff 10px); }
  .fav { width: 24px; height: 24px; }
  .serif-a { font: bold 27px 'Liberation Serif', serif; fill: #111; }
  .n123 { font: italic bold 23px 'Liberation Sans Narrow', 'Liberation Sans', sans-serif; fill: #ff7020; }
  .tab-title { margin-left: 12.500px; width: 154.500px; font-size: 16.500px; color: #3c4043; -webkit-mask-image: linear-gradient(90deg, #000 118px, transparent 157px); mask-image: linear-gradient(90deg, #000 118px, transparent 157px); }
  .x { width: 14px; height: 14px; margin-left: 12px; stroke: #3c4043; stroke-width: 2; }
  .newtab { width: 20px; height: 20px; margin: 15px 0 0 23.500px; stroke: #3c4043; stroke-width: 2.600; }
  .winctl { margin-left: auto; padding: 13px 26px 0 0; display: flex; gap: 53px; }
  .winctl svg { width: 16px; height: 16px; fill: none; stroke: #111; stroke-width: 1.200; }

  .addressbar { height: 56px; background: #fff; border-bottom: 2px solid #dadce0; display: flex; align-items: center; padding-left: 21px; flex: none; }
  .nav { width: 24px; height: 24px; margin-right: 24px; fill: none; stroke: #5f6368; stroke-width: 2.300; }
  .nav.dim { stroke: #bdc1c6; }
  .nav .solid { fill: #5f6368; stroke: none; }
  .nav:nth-child(3) { margin-right: 21px; }
  .omni { width: 1547px; height: 42px; border-radius: 21px; background: #f1f3f4; display: flex; align-items: center; padding-left: 20px; flex: none; }
  .lock { width: 14px; height: 18px; fill: #5f6368; }
  .lock path { fill: none; stroke: #5f6368; stroke-width: 2; }
  .url { margin-left: 17px; flex: 1; font-size: 20px; letter-spacing: -.05px; color: #5f6368; }
  .url b { font-weight: 400; color: #202124; }
  .oi { width: 24px; height: 24px; margin-right: 24.300px; fill: none; stroke: #5f6368; stroke-width: 2.200; }
  .oi .solid { fill: #5f6368; stroke: none; }
  .oi .thin { stroke-width: 1.700; }
  .oi.star { fill: #1a73e8; stroke: none; margin-right: 14px; }
  .ext { width: 24px; height: 24px; margin-left: 22px; fill: #5f6368; }
  .ext + .ext { margin-left: 24px; }
  .avatar { width: 33px; height: 33px; border-radius: 50%; background: #8d6e63; color: #fff; margin-left: 19.500px; font: 17px/33px Roboto, sans-serif; text-align: center; flex: none; }
  .more { width: 45px; height: 45px; border: 3px solid #1a73e8; border-radius: 50%; margin-left: 9px; display: flex; flex-direction: column; align-items: center; justify-content: center; gap: 3px; flex: none; }
  .more i { width: 4.500px; height: 4.500px; border-radius: 50%; background: #5f6368; }

  .menubar { height: 37px; border-bottom: 1px solid #dadce0; display: flex; align-items: center; padding: 0 13px 0 16px; flex: none; }
  nav { display: flex; font-size: 16.500px; letter-spacing: -.4px; }
  .change { font-size: 14px; letter-spacing: -.15px; color: #8a8a8a; text-decoration: underline; text-underline-offset: 2px; padding-top: 3px; }
  .user { margin-left: auto; font-size: 13px; letter-spacing: -.45px; padding-top: 2px; }
  .caret { width: 10px; height: 6px; background: #777; clip-path: polygon(0 0, 100% 0, 50% 100%); flex: none; }
  .caret.light { background: #a3a3a3; }
  .menubar .caret { margin: 0 7px 0 5.500px; }
  .sun { width: 20px; height: 20px; fill: none; stroke: #444; stroke-width: 1.800; margin-bottom: 2px; }

  .toolbar { height: 47px; border-bottom: 2px solid #dadce0; display: flex; align-items: center; flex: none; }
  .sep { width: 1px; height: 24px; background: #dfe1e4; flex: none; }
  .pct { width: 40px; font-size: 16.300px; letter-spacing: -.6px; padding-top: 4px; flex: none; }
  .tool { width: 24px; height: 24px; }
  .tool .d { fill: #fff; stroke: #444; stroke-width: 1.700; }
  .tool .z { fill: none; stroke: #666; stroke-width: 2.200; }
  .tool .l { fill: none; stroke: #c9c9c9; stroke-width: 1.500; }
  .tool .l .s { fill: #c9c9c9; stroke: none; }
  .right { width: 64px; height: 18px; margin: 0 20px 2px auto; fill: none; stroke: #666; stroke-width: 1.200; }
  .right .th { stroke: #555; stroke-width: 2; }

  main { height: 817px; display: flex; flex: none; }
  aside { width: 254px; position: relative; display: flex; flex-direction: column; flex: none; }
  .scroll { height: 771px; width: 242px; overflow: hidden; font-size: 15.500px; }
  .searchwrap { height: 69px; padding: 16px 0 0 10px; border-bottom: 1px solid #e3e5e7; }
  .search { width: 223px; height: 32px; border: 1px solid #cdd0d3; border-radius: 4px; background: #fff; display: flex; align-items: center; justify-content: space-between; padding: 0 6px 0 7px; font: 14.500px 'Liberation Sans', sans-serif; color: #757575; }
  .search svg { width: 16px; height: 16px; fill: none; stroke: #888; stroke-width: 2; }
  .head { height: 42px; border-bottom: 1px solid #e3e5e7; display: flex; align-items: center; padding: 0 0 2px 2.500px; letter-spacing: -.3px; }
  .head span { margin-left: 4.500px; }
  .head.closed { height: 42.300px; }
  .tri { width: 5px; height: 10px; margin-left: 2.500px; background: #999; clip-path: polygon(0 0, 100% 50%, 0 100%); }
  .tri + span { margin-left: 7px; }
  .acts { width: 80px; height: 16px; margin-left: auto; margin-right: 12px; fill: none; stroke: #7d7d7d; stroke-width: 1.500; }
  .acts text { fill: #999; stroke: none; }
  .dragwrap { height: 70px; padding: 14px 0 0 19px; border-bottom: 1px solid #e3e5e7; }
  .drag { width: 209px; height: 40px; border: 2px dotted #b0b0b0; border-radius: 10px; color: #a0a0a0; text-align: center; line-height: 38px; font-size: 15px; letter-spacing: -.1px; }
  .palette { height: 382px; border-bottom: 1px solid #e3e5e7; padding: 8px 0 0 12px; display: grid; grid-template-columns: repeat(5, 43.100px); grid-auto-rows: 40.750px; }
  .palette svg { width: 43.100px; height: 40.750px; fill: #fff; stroke: #000; stroke-width: 1.350; overflow: visible; }
  .palette :global(text) { fill: #333; stroke: none; font-family: 'Liberation Sans', sans-serif; }
  .palette :global(.hd) { fill: #111; }
  .palette :global(.lorem) { stroke: #a99abb; stroke-width: .8; stroke-dasharray: 3 .8; }
  .palette :global(.dots) { stroke: #96a; stroke-width: 1; stroke-dasharray: 2 1; }
  .palette :global(.shade) { fill: #ddd; }
  .palette :global(.nf) { fill: none; }
  .palette :global(.k) { fill: #000; stroke-width: .8; }
  .thumb { position: absolute; left: 245px; top: 2px; width: 6px; height: 656px; border-radius: 3px; background: #dfdfdf; }
  .moreshapes { height: 46px; border-top: 1px solid #d5d8db; padding-left: 18px; display: flex; align-items: center; font-size: 15.500px; font-weight: 700; color: #dd6b10; letter-spacing: -.35px; }
  .pl { width: 20px; font-size: 21px; font-weight: 600; line-height: 20px; }
  .splitter { width: 17px; border: solid #e0e2e5; border-width: 0 1px; display: flex; align-items: center; justify-content: center; gap: 1px; padding: 0 0 2px 2px; flex: none; }
  .splitter i { width: 1.500px; height: 8px; background: #666; }

  section { width: 1649px; background: #f8f9fb; display: flex; flex-direction: column; }
  .canvas { width: 1649px; height: 771px; }
  .wire { fill: none; stroke: #111; stroke-width: 1.300; }
  .node rect { stroke-width: 1.200; }
  .node text { font: 21.600px 'Liberation Sans', Arial, sans-serif; text-anchor: middle; fill: #111; }
  .node.green text { font-weight: 700; }
  .green rect { fill: #d5e8d4; stroke: #82b366; }
  .peach rect { fill: #ffe6cc; stroke: #d79b00; }
  .sky rect { fill: #dae8fc; stroke: #6c8ebf; }
  .olive rect { fill: #e3c800; stroke: #b09500; }
  .orange rect { fill: #f0a30a; stroke: #bd7000; }
  .slate rect { fill: #bac8d3; stroke: #23445d; }
  .rose rect { fill: #fad9d5; stroke: #ae4132; }
  .tan rect { fill: #fad7ac; stroke: #b46504; }
  .aqua rect { fill: #b1ddf0; stroke: #10739e; }
  .cream rect { fill: url(#g-cream); stroke: #d6b656; }
  .amber rect { fill: url(#g-amber); stroke: #d79b00; }
  .pink rect { fill: url(#g-pink); stroke: #996185; }
  .blue rect { fill: url(#g-blue); stroke: #6c8ebf; }

  .pages { height: 46px; background: #f1f3f4; border-top: 1px solid #e0e2e4; display: flex; font-size: 15.500px; color: #808080; letter-spacing: -.2px; }
  .pdots { width: 34.500px; display: flex; flex-direction: column; align-items: center; padding-top: 15px; gap: 2.500px; border-right: 1px solid #e0e2e4; flex: none; }
  .pdots i { width: 4px; height: 4px; background: #8a8a8a; }
  .page { width: 166.600px; text-align: center; line-height: 53px; border-right: 1px solid #e4e6e8; flex: none; }
  .page.on { background: #fff; color: #dd6b10; font-weight: 700; letter-spacing: -.7px; }
  .addpage { width: 35px; border-right: 1px solid #e4e6e8; padding: 14px 0 0 9px; }
  .addpage svg { width: 16px; height: 16px; stroke: #8f8f8f; stroke-width: 2.800; }

  .taskbar { height: 72px; background: #d6e0f7; border-top: 2px solid #c9d2ec; display: flex; flex: none; color: #1a1a1a; font-size: 16.500px; }
  .weather { width: 530.500px; display: flex; padding: 12px 0 0 29px; line-height: 23.500px; flex: none; }
  .weather svg { width: 36px; height: 36px; margin-right: 12.500px; margin-top: 3px; }
  .sub { color: #5a6170; font-size: 17px; letter-spacing: .15px; }
  .apps { display: flex; flex: none; }
  .app { position: relative; width: 66.100px; display: flex; justify-content: center; padding-top: 15px; }
  .app svg { width: 40px; height: 40px; position: relative; }
  .app.current::before { content: ''; position: absolute; left: 5px; top: 6px; width: 57px; height: 58px; border-radius: 5px; background: #eaf0fb; border: 1px solid #dde5f5; }
  .badge { position: absolute; left: 36px; top: 10px; width: 23px; height: 23px; border-radius: 50%; background: #8d6e63; color: #e8dedb; font-size: 13px; line-height: 23px; text-align: center; }
  .bar { position: absolute; bottom: 6px; left: 21px; width: 24px; height: 5px; border-radius: 3px; background: #0f78d4; }
  .dot { position: absolute; bottom: 6px; left: 29px; width: 8px; height: 5px; border-radius: 3px; background: #74798a; }
  .dell { font: bold 12.500px 'Liberation Sans', sans-serif; fill: #111; }
  .w { font: bold 15px 'Open Sans', sans-serif; fill: #fff; }
  .key { font: bold 11px 'Liberation Sans', sans-serif; fill: #f02030; text-anchor: middle; }
  .tray { margin-left: auto; display: flex; align-items: center; padding-right: 29px; flex: none; }
  .tray svg { fill: none; stroke: #111; stroke-width: 1.400; }
  .t1 { width: 20px; height: 24px; margin-right: 13px; }
  .t2 { width: 26px; height: 24px; margin-right: 10px; }
  .t3 { width: 26px; height: 28px; margin-right: 21px; }
  .t4, .t5, .t6 { width: 26px; height: 24px; margin-right: 10px; }
  .eng { width: 35px; font-size: 17px; margin-right: 26px; }
  .clock { width: 101px; text-align: right; line-height: 23px; font-size: 17px; letter-spacing: .1px; margin-left: 1px; padding-bottom: 1px; }
  .nine { width: 24px; height: 24px; border-radius: 50%; background: #0f78d4; color: #fff; font-size: 14px; line-height: 24px; text-align: center; margin-left: 11px; }
</style>
